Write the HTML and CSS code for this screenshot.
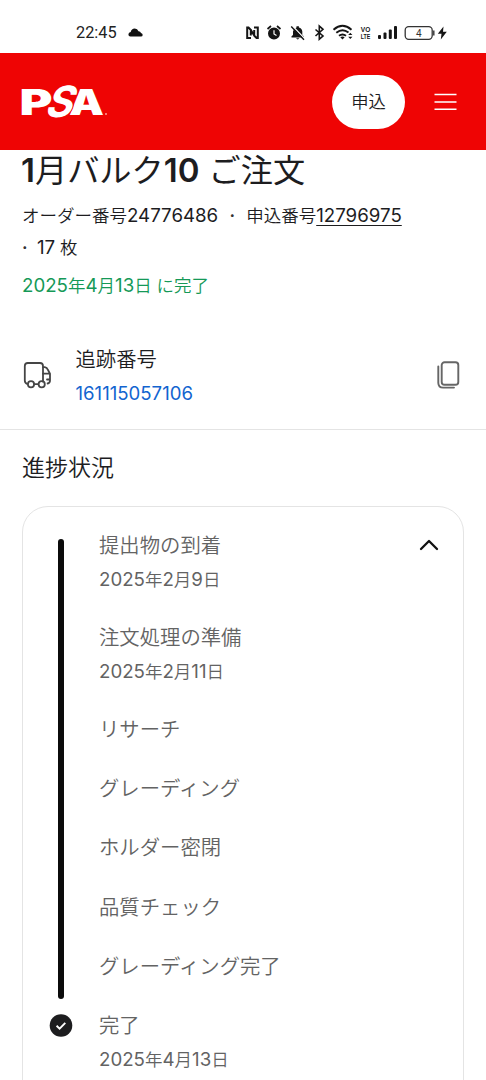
FILE: index.html
```html
<!DOCTYPE html>
<html lang="ja">
<head>
<meta charset="utf-8">
<title>PSA</title>
<link rel="stylesheet" href="styles.css">
</head>
<body>
<div class="screen">
  <div class="status">
    <span class="clock">22:45</span>
    <svg class="cloud" width="15" height="9" viewBox="0 0 15 9"><path d="M2.500 8.500Q.3 8.500 .4 6.300Q.6 4.300 2.700 4Q3.400 .5 6.800 .5Q9.500 .6 10.500 3.200Q12.500 3.200 13 5Q14.700 5.500 14.700 7Q14.500 8.500 13 8.500Z" fill="#111"/></svg>
    <svg class="indicators" width="204" height="20" viewBox="245 23 204 20">
      <g fill="none" stroke="#151515" stroke-width="2">
        <path d="M251 38H247.200V27.500H248.500L250.800 30V35.500M254 27.500H257.800V38H256.500L254.200 35.500V30M250.500 29.500L254.500 36"/>
      </g>
      <g stroke="#151515" fill="none">
        <circle cx="274" cy="33.500" r="5" fill="#151515" stroke-width="2"/>
        <path d="M267.500 29L271 26M277 26L280.500 29" stroke-width="1.700"/>
        <path d="M274 30.200V34L276.500 35.500" stroke="#fff" stroke-width="1.200"/>
      </g>
      <path d="M291.500 37.500V36.300L293 35V31.500Q293.500 28.300 296.500 27.500V26.300H298.900V27.500Q302 28.300 302.300 31.500V35L303.800 36.300V37.500ZM296 38.300H299.400Q297.800 40.500 296 38.300Z" fill="#151515"/>
      <path d="M292.500 26L305 39" stroke="#fff" stroke-width="1.300"/>
      <path d="M291.200 26.500L304 39.800" stroke="#151515" stroke-width="1.400"/>
      <path d="M315.500 29.500L323 36L319.300 39.200V26L323 29.300L315.500 36" fill="none" stroke="#151515" stroke-width="1.600"/>
      <g fill="none" stroke="#151515" stroke-width="1.900">
        <path d="M333.500 29.700Q342.500 22 351.500 29.700"/>
        <path d="M336.300 32.800Q342.500 27.800 348.500 32.600"/>
        <path d="M339 35.800Q342.500 33 346 35.800"/>
      </g>
      <path d="M340.300 37.300Q342.500 35.800 344.700 37.300L342.500 39.500Z" fill="#151515"/>
      <path d="M348.200 35L350.300 32.700L352.400 35ZM348.200 36.700H352.400L350.300 39Z" fill="#151515"/>
      <text x="360.800" y="32.200" class="volte" textLength="9.500" lengthAdjust="spacingAndGlyphs">VO</text>
      <text x="360.800" y="39.200" class="volte" textLength="9.500" lengthAdjust="spacingAndGlyphs">LTE</text>
      <g fill="#151515">
        <rect x="378" y="35" width="3" height="4" rx="1"/>
        <rect x="383.500" y="32.500" width="3" height="6.500" rx="1"/>
        <rect x="388.800" y="29.500" width="3" height="9.500" rx="1"/>
        <rect x="394" y="26" width="3" height="13" rx="1"/>
      </g>
      <rect x="405.200" y="26.700" width="27" height="12.600" rx="3.500" fill="none" stroke="#333" stroke-width="1.300"/>
      <path d="M433.800 30.500V35.500" stroke="#333" stroke-width="1.400"/>
      <text x="418.800" y="36.800" class="charge">4</text>
      <path d="M443.500 26.500L437.800 33.800H441.500L440.800 39.500L446.800 31.800H443Z" fill="#151515"/>
    </svg>
  </div>

  <header class="bar">
    <svg class="logo" width="92" height="76" viewBox="18 64 92 76">
      <g class="mark">
        <text x="19.600" y="115.200" textLength="33" lengthAdjust="spacingAndGlyphs">P</text>
        <text x="69" y="115.200" textLength="35" lengthAdjust="spacingAndGlyphs">A</text>
        <text class="mark-s" transform="translate(43.500 117.400) skewX(-20)" x="0" y="0" textLength="27" lengthAdjust="spacingAndGlyphs">S</text>
      </g>
      <circle cx="106" cy="114" r="1" fill="#ff9c98"/>
    </svg>
    <button class="submit">申込</button>
    <svg class="menu" width="24" height="20" viewBox="0 0 24 20"><path d="M.5 2.500H22.500M.5 10H22.500M.5 17.300H22.500" stroke="#fff" stroke-width="1.500"/></svg>
  </header>

  <section class="order">
    <h1><b>1</b>月バルク<b>10</b> ご注文</h1>
    <p class="meta"><span>オーダー番号<i class="num">24776486</i></span><span class="dot">·</span><span>申込番号<a class="num">12796975</a></span></p>
    <p class="meta count"><span class="dot">·</span><span><i class="num">17</i> 枚</span></p>
    <p class="done"><i class="num">2025</i>年<i class="num">4</i>月<i class="num">13</i>日 に完了</p>
  </section>

  <section class="tracking">
    <svg class="truck" width="30" height="28" viewBox="0 0 30 28" fill="none" stroke="#454545" stroke-width="1.800" stroke-linejoin="round" stroke-linecap="round">
      <path d="M5 22.800Q2.800 22 2.800 19.500V5Q2.800 2 5.800 2H18Q21 2 21 5V20.500M12.500 23.200H16"/>
      <path d="M21 6.200H22.800Q25 6.500 26 9L28 12.700V19.500Q28 22 25.600 22.500M21 12.700H27.500M25 18.500H28"/>
      <circle cx="9" cy="23.200" r="3.100"/><circle cx="19.700" cy="23.200" r="3.100"/>
    </svg>
    <div class="track-text">
      <span class="track-label">追跡番号</span>
      <a class="track-number">161115057106</a>
    </div>
    <svg class="copy" width="24" height="28" viewBox="0 0 24 28" fill="none" stroke="#666" stroke-width="1.900" stroke-linecap="round">
      <rect x="5.700" y="1.300" width="16.600" height="22.400" rx="2.800"/>
      <path d="M2.300 5.500V22Q2.500 26.600 7 26.600H18"/>
    </svg>
  </section>

  <section class="progress">
    <h2>進捗状況</h2>
    <div class="card">
      <div class="rail">
        <div class="line"></div>
        <svg width="24" height="24" viewBox="0 0 24 24"><circle cx="12" cy="11.500" r="11.300" fill="#1d1d1f"/><path d="M7.600 11.700L10.600 14.600L16.300 8.900" fill="none" stroke="#fff" stroke-width="1.900"/></svg>
      </div>
      <ol class="steps">
        <li><span>提出物の到着</span><time><i class="num">2025</i>年<i class="num">2</i>月<i class="num">9</i>日</time></li>
        <li><span>注文処理の準備</span><time><i class="num">2025</i>年<i class="num">2</i>月<i class="num">11</i>日</time></li>
        <li><span>リサーチ</span></li>
        <li><span>グレーディング</span></li>
        <li><span>ホルダー密閉</span></li>
        <li><span>品質チェック</span></li>
        <li><span>グレーディング完了</span></li>
        <li><span>完了</span><time><i class="num">2025</i>年<i class="num">4</i>月<i class="num">13</i>日</time></li>
      </ol>
      <svg class="chevron" width="22" height="14" viewBox="0 0 22 14"><path d="M3 11L11 3L19 11" fill="none" stroke="#111" stroke-width="2.300" stroke-linecap="round" stroke-linejoin="round"/></svg>
    </div>
  </section>
</div>
</body>
</html>
```

FILE: styles.css
```css
* { box-sizing: border-box; }
body {
  margin: 0;
  background: #fff;
  color: #1d1d1f;
  font-family: Inter, "Noto Sans CJK JP", sans-serif;
  font-weight: 350;
}
h1, h2, p, ol { margin: 0; padding: 0; font-weight: 350; }
svg { display: block; flex: none; }
.screen { width: 486px; height: 1080px; overflow: hidden; }

.status { height: 53px; padding: 13px 37px 0 76px; display: flex; align-items: center; }
.clock { width: 42px; font: 400 16.300px/20px Roboto, sans-serif; color: #222; white-space: nowrap; }
.cloud { margin: 0 auto 1px 10px; }
.volte { font: 700 7.500px "Liberation Sans", sans-serif; fill: #151515; }
.charge { font: 400 10px Roboto, sans-serif; fill: #333; text-anchor: middle; }

.bar { height: 97px; padding: 0 28px 0 18px; display: flex; align-items: center; background: #ef0404; }
.mark { font: 900 36px Inter, sans-serif; fill: #fff; }
.mark-s { font-size: 43px; font-weight: 700; stroke: #ef0404; stroke-width: 2.200px; paint-order: stroke; }
.submit {
  width: 73px; height: 54px; margin-left: auto; padding: 0 0 1px;
  border: 0; border-radius: 27px; background: #fff; color: #1d1d1f;
  font: 350 17.300px/52px "Noto Sans CJK JP", sans-serif;
}
.menu { margin-left: 29px; margin-top: 1px; }

.order { height: 190px; padding: 1px 22px 0; white-space: nowrap; }
h1 { margin-left: -1px; font-size: 32.200px; line-height: 40px; font-weight: 400; }
h1 b { font-weight: 600; font-size: 33px; line-height: 0; }
.meta { display: flex; margin-top: 9px; font-size: 17.500px; line-height: 32px; }
.num { font-style: normal; font-weight: 400; font-size: 18.700px; line-height: 0; }
a.num { text-decoration: underline; text-underline-offset: 3px; text-decoration-thickness: 1px; }
.dot { width: 28px; text-align: center; color: #333; font-weight: 600; }
.count { margin-top: 0; }
.count .dot { width: 15px; text-align: left; }
.done { margin-top: 6px; font-size: 17.500px; line-height: 32px; color: #159957; }

.tracking { height: 90px; padding: 0 26px 0 22px; display: flex; align-items: flex-start; border-bottom: 1px solid #e4e4e4; }
.truck { margin-top: 21px; }
.track-text { display: flex; flex-direction: column; margin-left: 23.500px; }
.track-label { font-size: 20.350px; line-height: 34px; margin-top: 3px; }
.track-number { font-size: 18.600px; line-height: 33px; color: #1264d0; font-weight: 400; }
.copy { margin: 21px 0 0 auto; }

.progress { padding: 18px 22px 0; }
h2 { font-size: 23px; line-height: 40px; }
.card { height: 640px; margin-top: 18px; padding: 0 23px 0 26px; display: flex; border: 1px solid #e4e4e4; border-radius: 26px; }
.rail { width: 24px; padding-top: 32px; display: flex; flex-direction: column; align-items: center; gap: 15px; }
.line { width: 6px; height: 460px; border-radius: 3px; background: #0b0b0b; }
.steps { margin-left: 26px; padding-top: 22px; list-style: none; white-space: nowrap; }
.steps li { min-height: 34px; margin-bottom: 25.350px; color: #636363; }
.steps li:has(time) { margin-bottom: 23.850px; }
.steps span { display: block; font-size: 20.350px; line-height: 34px; }
.steps time { display: block; font-size: 17.500px; line-height: 34px; }
.chevron { margin: 31px 0 0 auto; }
```
